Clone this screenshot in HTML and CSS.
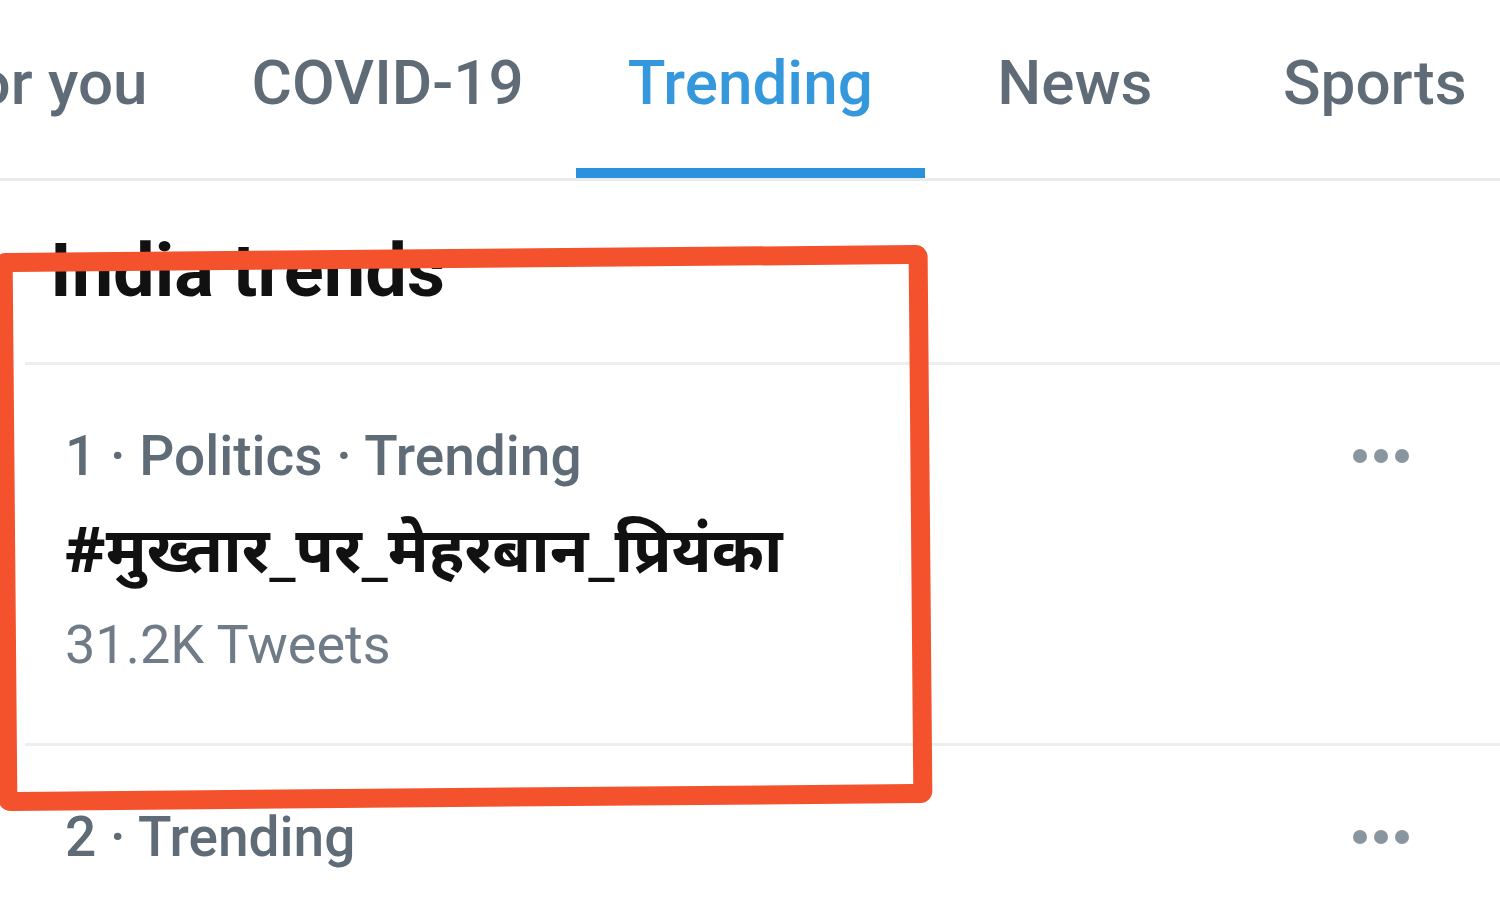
FILE: index.html
```html
<!DOCTYPE html>
<html lang="en">
<head>
    <meta charset="UTF-8">
    <meta name="viewport" content="width=device-width, initial-scale=1.0">
    <title>Explore - Trending</title>
    <link rel="stylesheet" href="styles.css">
</head>
<body>
    <div class="page">
        <nav class="tabs">
            <div class="tab">For you</div>
            <div class="tab">COVID-19</div>
            <div class="tab active">Trending</div>
            <div class="tab">News</div>
            <div class="tab">Sports</div>
        </nav>

        <div class="section">
            <h2 class="section-title">India trends</h2>
        </div>

        <ul class="trend-list">
            <li class="trend">
                <div class="trend-body">
                    <div class="trend-meta">1 · Politics · Trending</div>
                    <div class="trend-name">#मुख्तार_पर_मेहरबान_प्रियंका</div>
                    <div class="trend-count">31.2K Tweets</div>
                </div>
                <svg class="more" width="58" height="64" viewBox="0 0 58 64">
                    <circle cx="8" cy="32" r="7"/>
                    <circle cx="29" cy="32" r="7"/>
                    <circle cx="50" cy="32" r="7"/>
                </svg>
            </li>
            <li class="trend">
                <div class="trend-body">
                    <div class="trend-meta">2 · Trending</div>
                </div>
                <svg class="more" width="58" height="64" viewBox="0 0 58 64">
                    <circle cx="8" cy="32" r="7"/>
                    <circle cx="29" cy="32" r="7"/>
                    <circle cx="50" cy="32" r="7"/>
                </svg>
            </li>
        </ul>

        <!-- red highlight drawn over the first trend -->
        <div class="highlight"></div>
    </div>
</body>
</html>
```

FILE: styles.css
```css
body { margin: 0; background: #fff; font-family: Roboto, "Noto Sans", "DejaVu Sans", sans-serif; color: #14171a; overflow: hidden; }
.page { position: relative; width: 1500px; height: 900px; overflow: hidden; }

.tabs { display: flex; margin-left: -110px; border-bottom: 3px solid #e8ecef; }
.tab { flex: none; box-sizing: border-box; min-width: 300px; height: 178px; padding: 51px 52px 0; text-align: center; font-size: 62px; line-height: 64px; font-weight: 500; color: #5f6c78; white-space: nowrap; }
.tab.active { color: #3598dc; border-bottom: 10px solid #2a91dc; }

.section { margin-left: 25px; padding: 53px 0 54px 25px; border-bottom: 3px solid #eceff1; }
.section-title { margin: 0; font-size: 74px; line-height: 74px; font-weight: 700; color: #111; }

.trend-list { list-style: none; margin: 0 0 0 25px; padding: 0; }
.trend { display: flex; justify-content: space-between; align-items: flex-start; padding: 59px 90px 66px 40px; border-bottom: 3px solid #eceff1; }
.trend-meta { font-size: 55px; line-height: 64px; font-weight: 500; color: #5f6c78; }
.trend-name { margin-top: 10px; font-family: "Noto Sans", Roboto, sans-serif; font-size: 63px; line-height: 100px; font-weight: 700; color: #111; }
.trend-count { margin-top: 15px; font-size: 54px; line-height: 64px; color: #6f7b86; }
.more { fill: #8a969f; }

.highlight { position: absolute; left: -4px; top: 249px; width: 896px; height: 520px; border: 19px solid #f4522d; border-radius: 12px; transform: rotate(-0.5deg); }
```
